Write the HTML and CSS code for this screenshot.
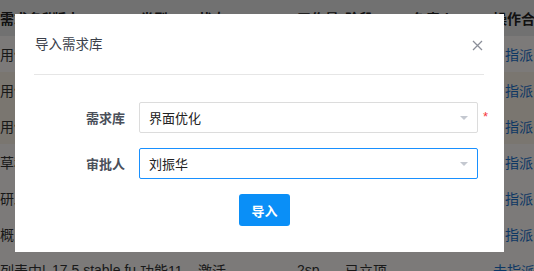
FILE: index.html
```html
<!DOCTYPE html>
<html lang="zh-CN">
<head>
    <meta charset="UTF-8">
    <meta name="viewport" content="width=device-width, initial-scale=1.0">
    <title>导入需求库</title>
    <link rel="stylesheet" href="styles.css">
</head>
<body>
    <div class="list">
        <div class="list-row list-head">
            <span>需求名称</span><span>版本</span><span>类型</span><span>状态</span><span>工作量</span><span>阶段</span><span>负责人</span>
            <span class="op">操作合<i class="sorter"></i></span>
        </div>
        <div class="list-row"><span>用例管理</span><span>17.5 stable</span><span>功能11</span><span>激活</span><span>1sp</span><span>已立项</span><span>张三</span><span class="op link pad">指派</span></div>
        <div class="list-row warm"><span>用例评审</span><span>17.5 stable</span><span>功能11</span><span>激活</span><span>2sp</span><span>已立项</span><span>李四</span><span class="op link pad">指派</span></div>
        <div class="list-row warm"><span>用例导出</span><span>17.5 stable</span><span>功能11</span><span>激活</span><span>3sp</span><span>已立项</span><span>王五</span><span class="op link pad">指派</span></div>
        <div class="list-row"><span>草稿箱</span><span>17.5 stable</span><span>功能11</span><span>激活</span><span>1sp</span><span>已立项</span><span>赵六</span><span class="op link pad">指派</span></div>
        <div class="list-row"><span>研发看板</span><span>17.5 stable</span><span>功能11</span><span>激活</span><span>2sp</span><span>已立项</span><span>钱七</span><span class="op link pad">指派</span></div>
        <div class="list-row"><span>概览优化</span><span>17.5 stable</span><span>功能11</span><span>激活</span><span>2sp</span><span>已立项</span><span>孙八</span><span class="op link pad">指派</span></div>
        <div class="list-row"><span>列表中|</span><span>17.5 stable fu</span><span>功能11</span><span>激活</span><span>2sp</span><span>已立项</span><span></span><span class="op link">去指派</span></div>
    </div>

    <div class="mask"></div>

    <div class="modal">
        <div class="modal-header">
            <span class="modal-title">导入需求库</span>
            <svg class="modal-close" width="11" height="11" viewBox="0 0 11 11">
                <path d="M1 1 L10 10 M10 1 L1 10" stroke="#8b8f99" stroke-width="1.3" fill="none"/>
            </svg>
        </div>
        <div class="modal-body">
            <div class="form-row">
                <label class="form-label">需求库</label>
                <div class="select">
                    <span>界面优化</span>
                    <i class="caret"></i>
                </div>
                <span class="required">*</span>
            </div>
            <div class="form-row">
                <label class="form-label">审批人</label>
                <div class="select focused">
                    <span>刘振华</span>
                    <i class="caret"></i>
                </div>
            </div>
            <div class="form-actions">
                <button class="btn-primary">导入</button>
            </div>
        </div>
    </div>
</body>
</html>
```

FILE: styles.css
```css
* {
    box-sizing: border-box;
}

body {
    margin: 0;
    width: 534px;
    height: 271px;
    overflow: hidden;
    background-color: #f7f4f2;
    font-family: "Liberation Sans", "Noto Sans CJK SC", sans-serif;
    color: #333;
}

.list {
    width: 534px;
    height: 271px;
    overflow: hidden;
}

.list-row {
    display: grid;
    grid-template-columns: 52px 88px 58px 99px 48px 67px 81px 41px;
    height: 36px;
    align-items: center;
    font-size: 14px;
    white-space: nowrap;
    background-color: #f8f5f3;
}

.list-row span {
    overflow: hidden;
}

.list-head {
    background-color: #e2e2e2;
    font-weight: bold;
    color: #222;
}

.list-row.warm {
    background-color: #f5ece1;
}

.op {
    display: flex;
    align-items: center;
}

.link {
    color: #1a6fc9;
}

.pad {
    padding-left: 12px;
}

.sorter {
    display: inline-block;
    flex: none;
    width: 0;
    height: 0;
    margin-left: 4px;
    border-left: 5px solid transparent;
    border-right: 5px solid transparent;
    border-bottom: 6px solid #9a9a9a;
}

.mask {
    position: fixed;
    inset: 0;
    background-color: rgba(0, 0, 0, 0.5);
}

.modal {
    position: fixed;
    left: 15px;
    top: 14px;
    width: 489px;
    height: 238px;
    background-color: #fff;
    font-family: "Liberation Sans", "Noto Sans CJK SC", sans-serif;
}

.modal-header {
    display: flex;
    justify-content: space-between;
    align-items: center;
    margin: 0 20px 0 19px;
    padding: 20px 0 18px 1px;
    border-bottom: 1px solid #e6e6e6;
}

.modal-title {
    font-size: 13.5px;
    line-height: 22px;
    color: #3a3f4a;
}

.modal-close {
    margin-right: 1px;
}

.modal-body {
    padding-top: 27px;
}

.form-row {
    display: flex;
    align-items: center;
    margin-bottom: 15px;
}

.form-label {
    width: 124px;
    padding-right: 14px;
    text-align: right;
    font-size: 13px;
    font-weight: bold;
    color: #4a4f5a;
}

.select {
    display: flex;
    justify-content: space-between;
    align-items: center;
    width: 339px;
    height: 31px;
    padding: 0 9px;
    border: 1px solid #dcdcdc;
    border-radius: 2px;
    font-size: 13px;
    color: #222;
}

.select.focused {
    border-color: #1890ff;
}

.caret {
    width: 0;
    height: 0;
    border-left: 4px solid transparent;
    border-right: 4px solid transparent;
    border-top: 4px solid #c4c8d0;
}

.required {
    margin-left: 5px;
    margin-top: -2px;
    font-size: 13px;
    color: #f5363a;
}

.form-actions {
    display: flex;
    justify-content: center;
    padding-left: 10px;
}

.btn-primary {
    width: 51px;
    height: 32px;
    border: none;
    border-radius: 3px;
    background-color: #0a8ff7;
    color: #fff;
    font-family: "Liberation Sans", "Noto Sans CJK SC", sans-serif;
    font-size: 13px;
    font-weight: bold;
}
```
